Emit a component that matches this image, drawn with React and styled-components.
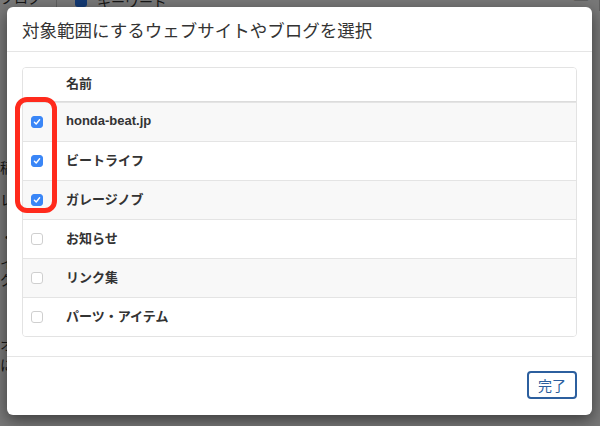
import React from 'react';
import styled, { createGlobalStyle } from 'styled-components';

const GlobalStyle = createGlobalStyle`
  html, body {
    margin: 0;
    padding: 0;
    width: 600px;
    height: 426px;
    overflow: hidden;
    font-family: 'Liberation Sans', 'Noto Sans CJK JP', sans-serif;
  }
`;

const Page = styled.div`
  position: relative;
  width: 600px;
  height: 426px;
  background: #fff;
  overflow: hidden;
`;

/* page behind the dialog */
const TopStrip = styled.div`
  display: flex;
  align-items: center;
  height: 14px;
  margin-top: -6px;
  font-size: 14px;
  color: #333;
`;

const SideLabel = styled.div`
  width: 56px;
  flex: none;
  white-space: nowrap;
  border-right: 1px solid #ccc;
  height: 20px;
  line-height: 14px;
`;

const BgCheck = styled.span`
  width: 12px;
  height: 12px;
  border-radius: 3px;
  background: #2b7cf6;
  margin: 0 10px 0 18px;
`;

const BgKeyword = styled.span`
  flex: 1;
`;

const BgDash = styled.span`
  width: 25px;
  border-right: 1px solid #ccc;
  height: 20px;
  font-weight: bold;
  line-height: 16px;
`;

const SideColumn = styled.div`
  display: flex;
  flex-direction: column;
  font-size: 14px;
  color: #333;
`;

const SideChar = styled.div`
  margin-top: ${(p) => p.$gap}px;
  line-height: 16px;
`;

const Backdrop = styled.div`
  position: absolute;
  inset: 0;
  background: rgba(0, 0, 0, 0.53);
  padding: 7px 8px 10px 7px;
`;

const Modal = styled.div`
  width: 585px;
  height: 408px;
  display: flex;
  flex-direction: column;
  background: #fff;
  border-radius: 6px;
  box-shadow: 0 5px 15px rgba(0, 0, 0, 0.5);
  position: relative;
`;

const ModalHeader = styled.div`
  flex: none;
  height: 45px;
  box-sizing: border-box;
  padding: 0 15px;
  display: flex;
  align-items: center;
  border-bottom: 1px solid #e5e5e5;
`;

const Title = styled.h4`
  margin: 0;
  font-family: 'Noto Sans CJK JP', sans-serif;
  font-weight: 400;
  font-size: 17.5px;
  color: #333;
`;

const ModalBody = styled.div`
  flex: 1;
  min-height: 0;
  padding: 15px 15px 20px;
  border-bottom: 1px solid #e5e5e5;
`;

const Table = styled.div`
  border: 1px solid #e3e3e3;
  border-radius: 4px;
  overflow: hidden;
`;

const Row = styled.div`
  display: flex;
  align-items: center;
  box-sizing: border-box;
  height: ${(p) => (p.$head ? 34 : 39)}px;
  padding-bottom: ${(p) => (p.$head ? 4 : 4)}px;
  background: ${(p) => (p.$striped ? '#f8f8f8' : '#fff')};
  border-top: ${(p) => (p.$head ? 'none' : '1px solid #e4e4e4')};
  border-bottom: ${(p) => (p.$head ? '1px solid #dcdcdc' : 'none')};
  font-size: 13px;
  font-weight: bold;
  color: #333;
`;

const CheckCell = styled.div`
  width: 43px;
  flex: none;
  box-sizing: border-box;
  display: flex;
  padding-left: 8px;
  padding-top: 3px;
`;

const Box = styled.span`
  width: 12px;
  height: 12px;
  box-sizing: border-box;
  border-radius: 3px;
  display: flex;
  align-items: center;
  justify-content: center;
  background: ${(p) => (p.$on ? '#3a86f7' : '#fff')};
  border: 1px solid ${(p) => (p.$on ? '#3a86f7' : '#cfcfcf')};
`;

const NameCell = styled.div`
  flex: 1;
`;

const ModalFooter = styled.div`
  flex: none;
  height: 58px;
  box-sizing: border-box;
  display: flex;
  justify-content: flex-end;
  align-items: center;
  padding: 0 15px 2px;
`;

const DoneButton = styled.button`
  width: 50px;
  height: 28px;
  border: 2px solid #2c5f9e;
  border-radius: 4px;
  background: #fff;
  color: #2c5f9e;
  font-family: 'Noto Sans CJK JP', sans-serif;
  font-size: 14px;
  padding: 0;
`;

const Highlight = styled.div`
  position: absolute;
  left: 8px;
  top: 90px;
  width: 42px;
  height: 116px;
  box-sizing: border-box;
  border: 5px solid #ff2a1c;
  border-radius: 12px;
`;

const sites = [
  { name: 'honda-beat.jp', on: true },
  { name: 'ビートライフ', on: true },
  { name: 'ガレージノブ', on: true },
  { name: 'お知らせ', on: false },
  { name: 'リンク集', on: false },
  { name: 'パーツ・アイテム', on: false },
];

const Check = () => (
  <svg width="8" height="8" viewBox="0 0 8 8">
    <path d="M1.4 4.2 L3.2 6 L6.6 1.8" fill="none" stroke="#fff" strokeWidth="1.4" strokeLinecap="round" strokeLinejoin="round" />
  </svg>
);

const App = () => {
  return (
    <Page>
      <GlobalStyle />
      <TopStrip>
        <SideLabel>ブログ</SideLabel>
        <BgCheck />
        <BgKeyword>キーワード</BgKeyword>
        <BgDash>—</BgDash>
      </TopStrip>
      <SideColumn>
        <SideChar $gap={152}>稿</SideChar>
        <SideChar $gap={16}>レ</SideChar>
        <SideChar $gap={21}>・</SideChar>
        <SideChar $gap={10}>イ</SideChar>
        <SideChar $gap={1}>グ</SideChar>
        <SideChar $gap={49}>オ</SideChar>
        <SideChar $gap={4}>に</SideChar>
      </SideColumn>
      <Backdrop>
        <Modal>
          <ModalHeader>
            <Title>対象範囲にするウェブサイトやブログを選択</Title>
          </ModalHeader>
          <ModalBody>
            <Table>
              <Row $head>
                <CheckCell />
                <NameCell>名前</NameCell>
              </Row>
              {sites.map((s, i) => (
                <Row key={s.name} $striped={i % 2 === 0}>
                  <CheckCell>
                    <Box $on={s.on}>{s.on && <Check />}</Box>
                  </CheckCell>
                  <NameCell>{s.name}</NameCell>
                </Row>
              ))}
            </Table>
          </ModalBody>
          <ModalFooter>
            <DoneButton>完了</DoneButton>
          </ModalFooter>
          <Highlight />
        </Modal>
      </Backdrop>
    </Page>
  );
};

export default App;
